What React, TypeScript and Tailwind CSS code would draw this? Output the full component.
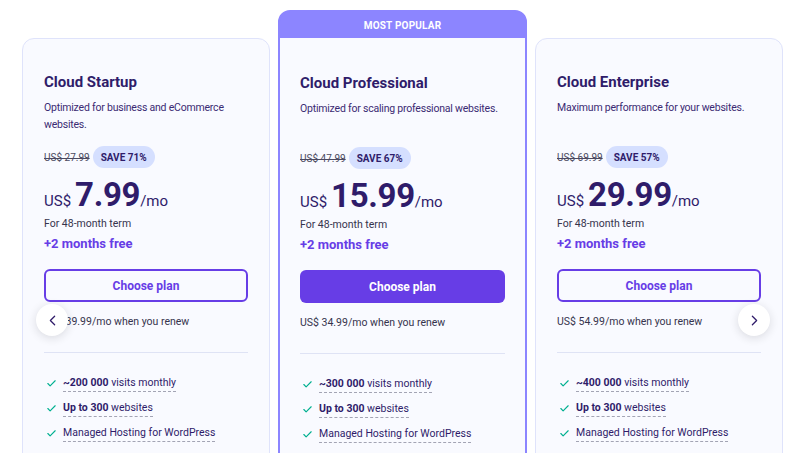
import { Check, ChevronLeft, ChevronRight } from 'lucide-react';

type Plan = {
  name: string;
  desc: string;
  oldPrice: string;
  save: string;
  price: string;
  renew: string;
  visits: string;
  popular?: boolean;
};

const PLANS: Plan[] = [
  {
    name: 'Cloud Startup',
    desc: 'Optimized for business and eCommerce websites.',
    oldPrice: 'US$ 27.99',
    save: 'SAVE 71%',
    price: '7.99',
    renew: 'US$ 39.99/mo when you renew',
    visits: '~200 000',
  },
  {
    name: 'Cloud Professional',
    desc: 'Optimized for scaling professional websites.',
    oldPrice: 'US$ 47.99',
    save: 'SAVE 67%',
    price: '15.99',
    renew: 'US$ 34.99/mo when you renew',
    visits: '~300 000',
    popular: true,
  },
  {
    name: 'Cloud Enterprise',
    desc: 'Maximum performance for your websites.',
    oldPrice: 'US$ 69.99',
    save: 'SAVE 57%',
    price: '29.99',
    renew: 'US$ 54.99/mo when you renew',
    visits: '~400 000',
  },
];

export default function App() {
  return (
    <div
      className="relative h-[453px] w-[800px] overflow-hidden bg-white text-[#2f1c6a]"
      style={{ fontFamily: 'Roboto, "Noto Sans", sans-serif' }}
    >
      <div className="flex gap-2 pl-[22px] pt-[10px]">
        {PLANS.map((p) => (
          <PlanCard key={p.name} plan={p} />
        ))}
      </div>

      {/* Carousel arrows */}
      <button className="absolute left-[36px] top-[304px] flex h-8 w-8 items-center justify-center rounded-full bg-white shadow-[0_2px_10px_rgba(29,30,32,0.14)]">
        <ChevronLeft size={17} strokeWidth={1.8} className="text-[#2f1c6a]" />
      </button>
      <button className="absolute left-[738px] top-[304px] flex h-8 w-8 items-center justify-center rounded-full bg-white shadow-[0_2px_10px_rgba(29,30,32,0.14)]">
        <ChevronRight size={17} strokeWidth={1.8} className="text-[#2f1c6a]" />
      </button>
    </div>
  );
}

function PlanCard({ plan }: { plan: Plan }) {
  const outer = plan.popular
    ? 'w-[249px] h-[470px] rounded-[12px] border-2 border-[#8c85ff] bg-[#8c85ff] overflow-hidden flex flex-col'
    : 'w-[248px] h-[460px] mt-[28px] rounded-[12px] border border-[#dfe3fb] bg-[#f9faff] flex flex-col';

  return (
    <div className={outer}>
      {plan.popular && (
        <div className="flex h-[26px] shrink-0 items-center justify-center text-[10px] font-bold tracking-[0.02em] text-white">
          MOST POPULAR
        </div>
      )}
      <div className={plan.popular ? 'flex-1 bg-[#f9faff] px-[20px] pt-[35px]' : 'flex-1 px-[21px] pt-[33px]'}>
        <h2 className="text-[15px] font-bold leading-[20px]">{plan.name}</h2>
        <p className="mt-[7px] min-h-[34px] text-[10.5px] leading-[17px] tracking-[-0.02em] text-[#3b2a73]">
          {plan.desc}
        </p>

        <div className="mt-[13px] flex items-center gap-[3px]">
          <span className="text-[10px] text-[#4b4960] line-through">{plan.oldPrice}</span>
          <span className="flex h-[22px] items-center rounded-full bg-[#d5dfff] px-[8px] text-[10px] font-bold text-[#2f1c6a]">
            {plan.save}
          </span>
        </div>

        <div className="mt-[8px] flex items-baseline">
          <span className="mr-[4px] text-[15px]">US$</span>
          <span className="text-[33px] font-bold leading-[38px] tracking-[-0.01em]">{plan.price}</span>
          <span className="text-[15px]">/mo</span>
        </div>
        <p className="mt-[2px] text-[10.5px] leading-[16px] text-[#36344d]">For 48-month term</p>
        <p className="mt-[3px] text-[13px] font-bold leading-[18px] text-[#673de6]">+2 months free</p>

        <button
          className={
            plan.popular
              ? 'mt-[16px] flex h-[33px] w-full items-center justify-center rounded-[6px] bg-[#673de6] text-[12px] font-bold text-white'
              : 'mt-[16px] flex h-[33px] w-full items-center justify-center rounded-[6px] border-2 border-[#673de6] text-[12px] font-bold text-[#673de6]'
          }
        >
          Choose plan
        </button>
        <p className="mt-[12px] text-[10.5px] leading-[16px] text-[#36344d]">{plan.renew}</p>

        <div className="mt-[22px] h-px bg-[#dfe3f5]" />

        <ul className="mt-[22px] flex flex-col gap-[8px] text-[10.5px] leading-[17px]">
          <Feature bold={plan.visits} rest=" visits monthly" />
          <Feature bold="Up to 300" rest=" websites" />
          <Feature rest="Managed Hosting for WordPress" />
        </ul>
      </div>
    </div>
  );
}

function Feature({ bold, rest }: { bold?: string; rest: string }) {
  return (
    <li className="flex items-center gap-[6px]">
      <Check size={11} strokeWidth={2.5} className="ml-[2px] shrink-0 text-[#00b090]" />
      <span className="border-b border-dashed border-[#a3a4b4] leading-[16px]">
        {bold && <b className="font-bold">{bold}</b>}
        {rest}
      </span>
    </li>
  );
}
